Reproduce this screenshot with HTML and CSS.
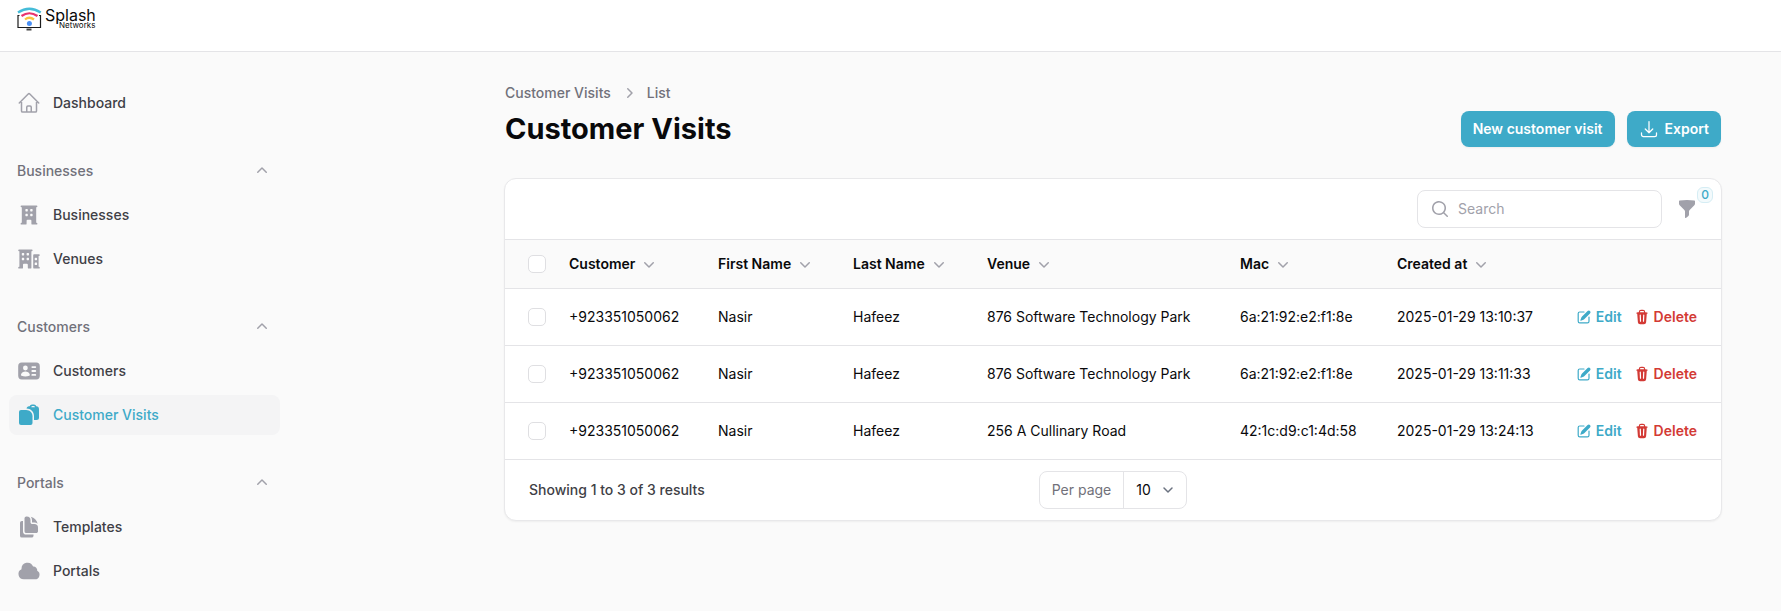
FILE: index.html
```html
<!DOCTYPE html>
<html lang="en">
<head>
<meta charset="utf-8">
<meta name="viewport" content="width=device-width, initial-scale=1">
<title>Customer Visits - Splash Networks</title>
<link rel="stylesheet" href="styles.css">
</head>
<body>
<svg class="sprite" aria-hidden="true">
  <symbol id="chevron-down" viewBox="0 0 20 20"><path d="M5.22 8.22a.75.75 0 0 1 1.06 0L10 11.94l3.72-3.72a.75.75 0 1 1 1.06 1.06l-4.25 4.25a.75.75 0 0 1-1.06 0L5.22 9.28a.75.75 0 0 1 0-1.06Z"/></symbol>
  <symbol id="chevron-up" viewBox="0 0 20 20"><path d="M9.47 6.47a.75.75 0 0 1 1.06 0l4.25 4.25a.75.75 0 1 1-1.06 1.06L10 8.06l-3.72 3.72a.75.75 0 0 1-1.06-1.06l4.25-4.25Z"/></symbol>
  <symbol id="chevron-right" viewBox="0 0 20 20"><path d="M8.22 5.22a.75.75 0 0 1 1.06 0l4.25 4.25a.75.75 0 0 1 0 1.06l-4.25 4.25a.75.75 0 0 1-1.06-1.06L11.94 10 8.22 6.28a.75.75 0 0 1 0-1.06Z"/></symbol>
  <symbol id="home" viewBox="0 0 24 24"><path fill="none" stroke="currentColor" stroke-width="1.5" stroke-linecap="round" stroke-linejoin="round" d="m2.25 12 8.954-8.955a1.126 1.126 0 0 1 1.591 0L21.75 12M4.5 9.75v10.125c0 .621.504 1.125 1.125 1.125H9.75v-4.875c0-.621.504-1.125 1.125-1.125h2.25c.621 0 1.125.504 1.125 1.125V21h4.125c.621 0 1.125-.504 1.125-1.125V9.75M8.25 21h8.25"/></symbol>
  <symbol id="building" viewBox="0 0 20 20"><path fill-rule="evenodd" d="M4 16.5v-13h-.25a.75.75 0 0 1 0-1.5h12.5a.75.75 0 0 1 0 1.5H16v13h.25a.75.75 0 0 1 0 1.5h-3.5a.75.75 0 0 1-.75-.75v-2.5a.75.75 0 0 0-.75-.75h-2.5a.75.75 0 0 0-.75.75v2.5a.75.75 0 0 1-.75.75h-3.5a.75.75 0 0 1 0-1.5H4ZM7 5.5a.5.5 0 0 1 .5-.5h1a.5.5 0 0 1 .5.5v1a.5.5 0 0 1-.5.5h-1a.5.5 0 0 1-.5-.5v-1ZM7.5 9a.5.5 0 0 0-.5.5v1a.5.5 0 0 0 .5.5h1a.5.5 0 0 0 .5-.5v-1a.5.5 0 0 0-.5-.5h-1ZM11 5.5a.5.5 0 0 1 .5-.5h1a.5.5 0 0 1 .5.5v1a.5.5 0 0 1-.5.5h-1a.5.5 0 0 1-.5-.5v-1ZM11.5 9a.5.5 0 0 0-.5.5v1a.5.5 0 0 0 .5.5h1a.5.5 0 0 0 .5-.5v-1a.5.5 0 0 0-.5-.5h-1Z"/></symbol>
  <symbol id="buildings" viewBox="0 0 20 20"><path fill-rule="evenodd" d="M1 2.75A.75.75 0 0 1 1.75 2h10.5a.75.75 0 0 1 0 1.5H12v13.75a.75.75 0 0 1-.75.75h-1.5a.75.75 0 0 1-.75-.75v-2.5a.75.75 0 0 0-.75-.75h-2.5a.75.75 0 0 0-.75.75v2.5a.75.75 0 0 1-.75.75h-2.5a.75.75 0 0 1 0-1.5H2v-13h-.25A.75.75 0 0 1 1 2.75ZM4 5.5a.5.5 0 0 1 .5-.5h1a.5.5 0 0 1 .5.5v1a.5.5 0 0 1-.5.5h-1a.5.5 0 0 1-.5-.5v-1ZM4.5 9a.5.5 0 0 0-.5.5v1a.5.5 0 0 0 .5.5h1a.5.5 0 0 0 .5-.5v-1a.5.5 0 0 0-.5-.5h-1ZM8 5.5a.5.5 0 0 1 .5-.5h1a.5.5 0 0 1 .5.5v1a.5.5 0 0 1-.5.5h-1a.5.5 0 0 1-.5-.5v-1ZM8.5 9a.5.5 0 0 0-.5.5v1a.5.5 0 0 0 .5.5h1a.5.5 0 0 0 .5-.5v-1a.5.5 0 0 0-.5-.5h-1ZM14.25 6a.75.75 0 0 0-.75.75V17a1 1 0 0 0 1 1h3.75a.75.75 0 0 0 0-1.5H18v-9h.25a.75.75 0 0 0 0-1.5h-4ZM14.75 9.5a.5.5 0 0 1 .5-.5h1a.5.5 0 0 1 .5.5v1a.5.5 0 0 1-.5.5h-1a.5.5 0 0 1-.5-.5v-1ZM15.25 13a.5.5 0 0 0-.5.5v1a.5.5 0 0 0 .5.5h1a.5.5 0 0 0 .5-.5v-1a.5.5 0 0 0-.5-.5h-1Z"/></symbol>
  <symbol id="id-card" viewBox="0 0 20 20"><path fill-rule="evenodd" d="M1 6a3 3 0 0 1 3-3h12a3 3 0 0 1 3 3v8a3 3 0 0 1-3 3H4a3 3 0 0 1-3-3V6ZM5 7.5a2 2 0 1 1 4 0 2 2 0 0 1-4 0ZM7 10.5a4 4 0 0 0-3.665 2.395.75.75 0 0 0 .416 1A8.98 8.98 0 0 0 7 14.5a8.98 8.98 0 0 0 3.249-.604.75.75 0 0 0 .416-1.001A4.001 4.001 0 0 0 7 10.5ZM12 6.75a.75.75 0 0 1 .75-.75h2.5a.75.75 0 0 1 0 1.5h-2.5a.75.75 0 0 1-.75-.75ZM12 13.25a.75.75 0 0 1 .75-.75h2.5a.75.75 0 0 1 0 1.5h-2.5a.75.75 0 0 1-.75-.75ZM12.75 9.25a.75.75 0 0 0 0 1.5h2.5a.75.75 0 0 0 0-1.5h-2.5Z"/></symbol>
  <symbol id="clipboard" viewBox="0 0 24 24"><path fill-rule="evenodd" d="M9.5 5.6C9.7 4.3 10.6 3.4 12 3.3h.7A2.5 2.5 0 0 1 15 1.5h2a2.5 2.5 0 0 1 2.300 1.800C21 3.500 22 4.500 22 6v8.500a2.500 2.500 0 0 1-2.500 2.500H17v-4C17 8.900 13.800 5.600 9.500 5.600ZM14.300 4.300a1.200 1.200 0 0 1 1.200-1.200h1.200a1.200 1.200 0 0 1 1.200 1.200Z"/><path d="M4 7h5.200c3.500 0 6.300 2.800 6.300 6.300V20a2 2 0 0 1-2 2H4a2 2 0 0 1-2-2V9a2 2 0 0 1 2-2Z"/></symbol>
  <symbol id="documents" viewBox="0 0 24 24"><path d="M7.5 3.375c0-1.036.84-1.875 1.875-1.875h.375a3.75 3.75 0 0 1 3.75 3.75v1.875C13.5 8.161 14.34 9 15.375 9h1.875A3.75 3.75 0 0 1 21 12.75v3.375C21 17.16 20.16 18 19.125 18h-9.75A1.875 1.875 0 0 1 7.5 16.125V3.375Z"/><path d="M15 5.25a5.23 5.23 0 0 0-1.279-3.434 9.768 9.768 0 0 1 6.963 6.963A5.23 5.23 0 0 0 17.25 7.5h-1.875A.375.375 0 0 1 15 7.125V5.25ZM4.875 6H6v10.125A3.375 3.375 0 0 0 9.375 19.5H16.5v1.125c0 1.035-.84 1.875-1.875 1.875h-9.75A1.875 1.875 0 0 1 3 20.625V7.875C3 6.839 3.84 6 4.875 6Z"/></symbol>
  <symbol id="cloud" viewBox="0 0 24 24"><path d="M4.5 9.75a6 6 0 0 1 11.573-2.226 3.75 3.75 0 0 1 4.133 4.303A4.5 4.5 0 0 1 18 20.25H6.75a5.25 5.25 0 0 1-2.23-10.004 6.072 6.072 0 0 1-.02-.496Z"/></symbol>
  <symbol id="download" viewBox="0 0 24 24"><path fill="none" stroke="currentColor" stroke-width="1.5" stroke-linecap="round" stroke-linejoin="round" d="M3 16.5v2.25A2.25 2.25 0 0 0 5.25 21h13.5A2.25 2.25 0 0 0 21 18.75V16.5M16.5 12 12 16.5m0 0L7.5 12m4.5 4.5V3"/></symbol>
  <symbol id="search" viewBox="0 0 20 20"><path fill-rule="evenodd" d="M9 3.5a5.5 5.5 0 1 0 0 11 5.5 5.5 0 0 0 0-11ZM2 9a7 7 0 1 1 12.452 4.391l3.328 3.329a.75.75 0 1 1-1.06 1.06l-3.329-3.328A7 7 0 0 1 2 9Z"/></symbol>
  <symbol id="funnel" viewBox="0 0 20 20"><path d="M2.628 1.601C5.028 1.206 7.49 1 10 1s4.973.206 7.372.601a.75.75 0 0 1 .628.74v2.288a2.25 2.25 0 0 1-.659 1.59l-4.682 4.683a2.25 2.25 0 0 0-.659 1.59v3.037c0 .684-.31 1.33-.844 1.757l-1.937 1.55A.75.75 0 0 1 8 18.25v-5.757a2.25 2.25 0 0 0-.659-1.591L2.659 6.22A2.25 2.25 0 0 1 2 4.629V2.34a.75.75 0 0 1 .628-.74Z"/></symbol>
  <symbol id="pencil" viewBox="0 0 20 20"><path d="m5.433 13.917 1.262-3.155A4 4 0 0 1 7.58 9.42l6.92-6.918a2.121 2.121 0 0 1 3 3l-6.92 6.918c-.383.383-.84.685-1.343.886l-3.154 1.262a.5.5 0 0 1-.65-.65Z"/><path d="M3.5 5.75c0-.69.56-1.25 1.25-1.25H10A.75.75 0 0 0 10 3H4.75A2.75 2.75 0 0 0 2 5.75v9.5A2.75 2.75 0 0 0 4.75 18h9.5A2.75 2.75 0 0 0 17 15.25V10a.75.75 0 0 0-1.5 0v5.25c0 .69-.56 1.25-1.25 1.25h-9.5c-.69 0-1.25-.56-1.25-1.25v-9.5Z"/></symbol>
  <symbol id="trash" viewBox="0 0 20 20"><path fill-rule="evenodd" d="M8.75 1A2.75 2.75 0 0 0 6 3.75v.443c-.795.077-1.584.176-2.365.298a.75.75 0 1 0 .23 1.482l.149-.022.841 10.518A2.75 2.75 0 0 0 7.596 19h4.807a2.75 2.75 0 0 0 2.742-2.53l.841-10.52.149.023a.75.75 0 0 0 .23-1.482A41.03 41.03 0 0 0 14 4.193V3.75A2.75 2.75 0 0 0 11.25 1h-2.5ZM10 4c.84 0 1.673.025 2.5.075V3.75c0-.69-.56-1.25-1.25-1.25h-2.5c-.69 0-1.25.56-1.25 1.25v.325C8.327 4.025 9.16 4 10 4ZM8.58 7.72a.75.75 0 0 0-1.5.06l.3 7.5a.75.75 0 1 0 1.5-.06l-.3-7.5Zm4.34.06a.75.75 0 1 0-1.5-.06l-.3 7.5a.75.75 0 1 0 1.5.06l.3-7.5Z"/></symbol>
</svg>

<header class="topbar">
  <a class="brand" href="#" aria-label="Splash Networks">
    <svg class="brand-logo" viewBox="0 0 82 32" aria-hidden="true">
      <g fill="none">
        <path d="M3.5 15.5H2V27.5H24.500V15.500H23" stroke="#1c1c1c" stroke-width="1.2"/>
        <path d="M10.500 29.500h5" stroke="#444" stroke-width="2"/>
        <path d="M2 12.500Q13.300 5 24.700 12.500" stroke="#45bcd8" stroke-width="2.400"/>
        <path d="M5.500 16Q13.300 10.500 21.500 16" stroke="#e8336d" stroke-width="2.200"/>
        <path d="M9 19.500Q13.300 16 18 19.500" stroke="#f9c440" stroke-width="2.200"/>
      </g>
      <circle cx="13.400" cy="23.500" r="2.500" fill="#4a90f5"/>
      <text class="brand-name" x="29" y="21">Splash<tspan class="brand-sub" x="43" y="28">Networks</tspan></text>
    </svg>
  </a>
</header>

<div class="layout">
  <nav class="sidebar" aria-label="Main">
    <ul class="nav-list">
      <li><a class="nav-item" href="#"><svg class="icon-lg"><use href="#home"/></svg>Dashboard</a></li>
    </ul>
    <section>
      <button class="nav-group" type="button" aria-expanded="true">Businesses<svg class="icon"><use href="#chevron-up"/></svg></button>
      <ul class="nav-list">
        <li><a class="nav-item" href="#"><svg class="icon-lg"><use href="#building"/></svg>Businesses</a></li>
        <li><a class="nav-item" href="#"><svg class="icon-lg"><use href="#buildings"/></svg>Venues</a></li>
      </ul>
    </section>
    <section>
      <button class="nav-group" type="button" aria-expanded="true">Customers<svg class="icon"><use href="#chevron-up"/></svg></button>
      <ul class="nav-list">
        <li><a class="nav-item" href="#"><svg class="icon-lg"><use href="#id-card"/></svg>Customers</a></li>
        <li><a class="nav-item active" href="#" aria-current="page"><svg class="icon-lg"><use href="#clipboard"/></svg>Customer Visits</a></li>
      </ul>
    </section>
    <section>
      <button class="nav-group" type="button" aria-expanded="true">Portals<svg class="icon"><use href="#chevron-up"/></svg></button>
      <ul class="nav-list">
        <li><a class="nav-item" href="#"><svg class="icon-lg"><use href="#documents"/></svg>Templates</a></li>
        <li><a class="nav-item" href="#"><svg class="icon-lg"><use href="#cloud"/></svg>Portals</a></li>
      </ul>
    </section>
  </nav>

  <main class="main">
    <div class="page-header">
      <div>
        <nav class="breadcrumbs" aria-label="Breadcrumb">
          <a href="#">Customer Visits</a>
          <svg class="icon"><use href="#chevron-right"/></svg>
          <a href="#">List</a>
        </nav>
        <h1 class="title">Customer Visits</h1>
      </div>
      <div class="actions">
        <button class="btn" type="button">New customer visit</button>
        <button class="btn" type="button"><svg class="icon"><use href="#download"/></svg>Export</button>
      </div>
    </div>

    <div class="card">
      <div class="toolbar">
        <label class="search"><svg class="icon"><use href="#search"/></svg><input type="search" placeholder="Search" aria-label="Search"></label>
        <button class="filter" type="button" aria-label="Filter"><svg class="icon"><use href="#funnel"/></svg><span class="badge">0</span></button>
      </div>
      <table class="table">
        <colgroup>
          <col class="col-check"><col class="col-customer"><col class="col-first"><col class="col-last"><col><col class="col-mac"><col class="col-created"><col class="col-actions">
        </colgroup>
        <thead>
          <tr>
            <th class="check"><input class="checkbox" type="checkbox" aria-label="Select all"></th>
            <th><button class="sort" type="button">Customer<svg class="icon"><use href="#chevron-down"/></svg></button></th>
            <th><button class="sort" type="button">First Name<svg class="icon"><use href="#chevron-down"/></svg></button></th>
            <th><button class="sort" type="button">Last Name<svg class="icon"><use href="#chevron-down"/></svg></button></th>
            <th><button class="sort" type="button">Venue<svg class="icon"><use href="#chevron-down"/></svg></button></th>
            <th><button class="sort" type="button">Mac<svg class="icon"><use href="#chevron-down"/></svg></button></th>
            <th><button class="sort" type="button">Created at<svg class="icon"><use href="#chevron-down"/></svg></button></th>
            <th></th>
          </tr>
        </thead>
        <tbody>
          <tr>
            <td class="check"><input class="checkbox" type="checkbox" aria-label="Select row 1"></td>
            <td>+923351050062</td><td>Nasir</td><td>Hafeez</td><td>876 Software Technology Park</td><td>6a:21:92:e2:f1:8e</td><td>2025-01-29 13:10:37</td>
            <td><div class="row-actions"><a class="link" href="#"><svg class="icon-sm"><use href="#pencil"/></svg>Edit</a><button class="link danger" type="button"><svg class="icon-sm"><use href="#trash"/></svg>Delete</button></div></td>
          </tr>
          <tr>
            <td class="check"><input class="checkbox" type="checkbox" aria-label="Select row 2"></td>
            <td>+923351050062</td><td>Nasir</td><td>Hafeez</td><td>876 Software Technology Park</td><td>6a:21:92:e2:f1:8e</td><td>2025-01-29 13:11:33</td>
            <td><div class="row-actions"><a class="link" href="#"><svg class="icon-sm"><use href="#pencil"/></svg>Edit</a><button class="link danger" type="button"><svg class="icon-sm"><use href="#trash"/></svg>Delete</button></div></td>
          </tr>
          <tr>
            <td class="check"><input class="checkbox" type="checkbox" aria-label="Select row 3"></td>
            <td>+923351050062</td><td>Nasir</td><td>Hafeez</td><td>256 A Cullinary Road</td><td>42:1c:d9:c1:4d:58</td><td>2025-01-29 13:24:13</td>
            <td><div class="row-actions"><a class="link" href="#"><svg class="icon-sm"><use href="#pencil"/></svg>Edit</a><button class="link danger" type="button"><svg class="icon-sm"><use href="#trash"/></svg>Delete</button></div></td>
          </tr>
        </tbody>
      </table>
      <div class="pagination">
        <span class="summary">Showing 1 to 3 of 3 results</span>
        <div class="per-page">
          <label for="per-page">Per page</label>
          <div class="select-wrap">
            <select id="per-page"><option>5</option><option selected>10</option><option>25</option><option>50</option></select>
            <svg class="select-arrow" viewBox="0 0 20 20"><path d="m6 8 4 4 4-4"/></svg>
          </div>
        </div>
      </div>
    </div>
  </main>
</div>
</body>
</html>
```

FILE: styles.css
```css
:root {
  --primary: #3eaac8;
  --danger: #d33a35;
  --gray-50: #fafafa;
  --gray-200: #e4e4e7;
  --gray-400: #a1a1aa;
  --gray-500: #71717a;
  --gray-700: #3f3f46;
  --gray-950: #09090b;
}

*, *::before, *::after { box-sizing: border-box; }

body {
  margin: 0;
  min-height: 100vh;
  background: var(--gray-50);
  color: var(--gray-950);
  font: 400 14px/20px Inter, "Liberation Sans", sans-serif;
}

button, input, select { font: inherit; color: inherit; }
button { margin: 0; padding: 0; border: 0; background: none; cursor: pointer; }
a { color: inherit; text-decoration: none; }
ul { margin: 0; padding: 0; list-style: none; }
svg { display: block; flex: none; fill: currentColor; }

.sprite { display: none; }
.icon-lg { width: 24px; height: 24px; color: var(--gray-400); }
.icon { width: 20px; height: 20px; color: var(--gray-400); }
.icon-sm { width: 16px; height: 16px; }

.topbar {
  height: 52px;
  padding: 0 16px;
  background: #fff;
  border-bottom: 1px solid var(--gray-200);
}
.brand { display: inline-block; }
.brand-logo { width: 82px; height: 32px; }
.brand-name { font: 400 16px Inter, sans-serif; fill: #0a0a0a; }
.brand-sub { font: 400 8px Inter, sans-serif; }

.layout {
  display: flex;
  justify-content: space-between;
}

.sidebar {
  display: flex;
  flex-direction: column;
  gap: 28px;
  flex: none;
  width: 289px;
  padding: 31px 9px 20px;
}
.nav-list { display: flex; flex-direction: column; gap: 4px; }
.nav-item, .nav-group {
  display: flex;
  align-items: center;
  height: 40px;
  padding: 0 8px;
  border-radius: 8px;
  font-weight: 500;
}
.nav-item { gap: 12px; color: var(--gray-700); }
.nav-item.active { background: #f4f4f5; color: var(--primary); }
.nav-item.active .icon-lg { color: var(--primary); }
.nav-group {
  justify-content: space-between;
  width: 100%;
  margin-bottom: 4px;
  color: var(--gray-500);
}

.main {
  flex: 1;
  min-width: 0;
  max-width: 1277px;
  padding: 31px 59px 32px 0;
}

.page-header { display: flex; justify-content: space-between; align-items: flex-end; padding: 0 1px; }
.breadcrumbs { display: flex; align-items: center; gap: 8px; font-weight: 500; color: var(--gray-500); }
.title { margin: 8px 0 0; font-size: 29px; line-height: 36px; font-weight: 700; }
.actions { display: flex; gap: 12px; }
.btn {
  display: flex;
  align-items: center;
  gap: 6px;
  height: 36px;
  padding: 0 12px;
  border-radius: 8px;
  background: var(--primary);
  color: #fff;
  font-weight: 600;
  box-shadow: 0 1px 2px rgba(0, 0, 0, 0.05);
}
.btn .icon { color: #fff; }

.card {
  margin-top: 31px;
  background: #fff;
  border: 1px solid #e8e8ea;
  border-radius: 12px;
  box-shadow: 0 1px 2px rgba(0, 0, 0, 0.05);
}
.toolbar {
  display: flex;
  justify-content: flex-end;
  align-items: center;
  gap: 15px;
  padding: 11px 24px;
}
.search {
  display: flex;
  align-items: center;
  gap: 8px;
  width: 245px;
  height: 38px;
  padding: 0 12px;
  border: 1px solid var(--gray-200);
  border-radius: 8px;
}
.search input {
  flex: 1;
  min-width: 0;
  padding: 0;
  border: 0;
  outline: 0;
  background: none;
}
.search input::placeholder { color: var(--gray-400); opacity: 1; }
.filter { position: relative; }
.badge {
  position: absolute;
  left: 20px;
  top: -12px;
  min-width: 16px;
  height: 16px;
  border: 1px solid #d5edf4;
  border-radius: 6px;
  background: #f3fafc;
  color: var(--primary);
  font-size: 12px;
  line-height: 14px;
  font-weight: 500;
  text-align: center;
}

.table { width: 100%; table-layout: fixed; border-collapse: separate; border-spacing: 0; }
.col-check { width: 52px; }
.col-customer { width: 149px; }
.col-first { width: 135px; }
.col-last { width: 134px; }
.col-mac { width: 157px; }
.col-created { width: 160px; }
.col-actions { width: 176px; }
.table th, .table td {
  padding: 0 12px;
  text-align: left;
  border-top: 1px solid var(--gray-200);
  white-space: nowrap;
}
.table th { height: 49px; background: var(--gray-50); }
.table td { height: 57px; }
.table th.check, .table td.check { padding: 0 0 0 23px; }
.sort { display: flex; align-items: center; gap: 4px; font-weight: 600; }
.checkbox {
  display: block;
  appearance: none;
  width: 18px;
  height: 18px;
  margin: 0;
  border: 1px solid #dfdfe2;
  border-radius: 5px;
  background: #fff;
}
.table td:last-child { padding-right: 24px; }
.row-actions { display: flex; justify-content: flex-end; gap: 12px; }
.link { display: flex; align-items: center; gap: 4px; color: var(--primary); font-weight: 600; }
.link.danger { color: var(--danger); }

.pagination {
  display: grid;
  grid-template-columns: 1fr auto 1fr;
  align-items: center;
  padding: 11px 24px;
  border-top: 1px solid var(--gray-200);
}
.summary { color: var(--gray-700); font-weight: 500; }
.per-page {
  display: flex;
  align-items: center;
  height: 38px;
  border: 1px solid var(--gray-200);
  border-radius: 8px;
}
.per-page label { padding: 0 12px; color: var(--gray-500); }
.select-wrap {
  position: relative;
  height: 36px;
  border-left: 1px solid var(--gray-200);
}
.select-wrap select {
  appearance: none;
  width: 62px;
  height: 36px;
  padding: 0 12px;
  border: 0;
  background: none;
}
.select-arrow {
  position: absolute;
  right: 8px;
  top: 8px;
  width: 20px;
  height: 20px;
  fill: none;
  stroke: #6b7280;
  stroke-width: 1.5;
  stroke-linecap: round;
  stroke-linejoin: round;
  pointer-events: none;
}
```
